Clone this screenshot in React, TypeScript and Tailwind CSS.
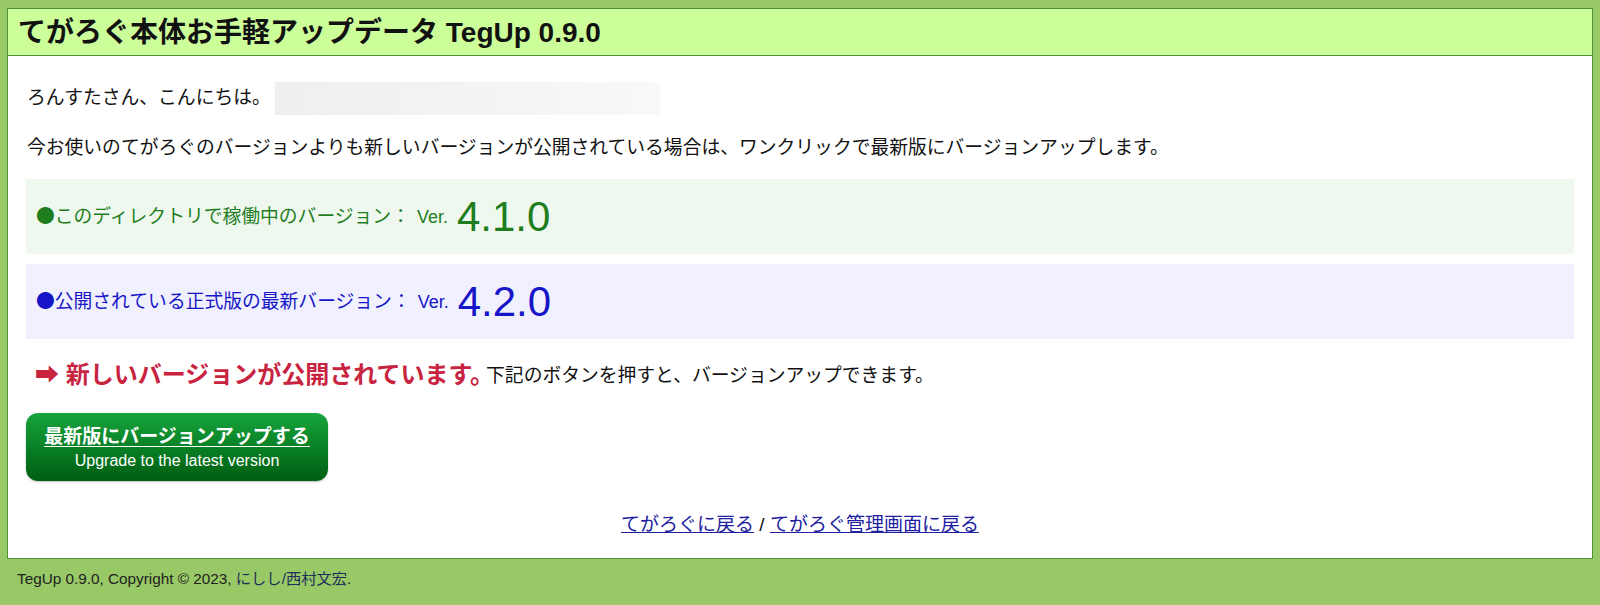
import React from 'react';

const jp = { fontFamily: '"Liberation Sans", "Noto Sans CJK JP", sans-serif' };
const cjk = { fontFamily: '"Noto Sans CJK JP", sans-serif' };

const VersionRow = ({ tone, label, version }: { tone: 'green' | 'blue'; label: string; version: string }) => {
  const box = tone === 'green' ? 'bg-[#eff8ef] text-[#1e7e1e]' : 'bg-[#f0f0fe] text-[#1616c8]';
  return (
    <div className={`flex items-center h-[75px] pl-[10px] ${box}`}>
      <span className="text-[18.8px]"><span style={cjk}>●</span>{label}：</span>
      <span className="ml-[7px] text-[18px] self-end mb-[23px]">Ver.</span>
      <span className="ml-[9px] text-[42px] leading-none">{version}</span>
    </div>
  );
};

export default function App() {
  return (
    <div className="w-[1600px] h-[605px] bg-[#99c866] pt-[8px] px-[7px] text-[#111]" style={jp}>
      <div className="border border-[#4f8f35] bg-white">
        <div className="h-[47px] bg-[#ccff99] border-b border-[#4f8f35] flex items-center pl-[10px] pt-[2px]">
          <h1 className="text-[28px] font-bold leading-none">てがろぐ本体お手軽アップデータ TegUp 0.9.0</h1>
        </div>

        <div className="px-[18px] pt-[26px] pb-[19px]">
          <div className="flex items-center h-[33px]">
            <span className="text-[18.8px] pl-[1px]">ろんすたさん、こんにちは。</span>
            <span className="ml-[4px] w-[385px] h-[33px] bg-gradient-to-r from-[#efefef] via-[#f3f3f3] to-[#f9f9f9]" />
          </div>

          <p className="mt-[19px] text-[18.8px] leading-[27px] pl-[1px]">
            今お使いのてがろぐのバージョンよりも新しいバージョンが公開されている場合は、ワンクリックで最新版にバージョンアップします。
          </p>

          <div className="mt-[18px] flex flex-col gap-[10px]">
            <VersionRow tone="green" label="このディレクトリで稼働中のバージョン" version="4.1.0" />
            <VersionRow tone="blue" label="公開されている正式版の最新バージョン" version="4.2.0" />
          </div>

          <div className="mt-[18px] h-[36px] flex items-center pl-[9px]">
            <span className="text-[24px] font-bold text-[#c8233f]">➡ 新しいバージョンが公開されています。</span>
            <span className="text-[18.8px] -ml-[8px] mt-[3px]">下記のボタンを押すと、バージョンアップできます。</span>
          </div>

          <button className="mt-[20px] w-[302px] h-[68px] rounded-[12px] bg-gradient-to-b from-[#17a53c] to-[#005e10] text-white flex flex-col items-center justify-center shadow-[0_1px_2px_rgba(0,0,0,0.25)]">
            <span className="text-[19px] font-bold underline underline-offset-[3px] leading-[26px]">最新版にバージョンアップする</span>
            <span className="text-[16px] leading-[21px]">Upgrade to the latest version</span>
          </button>

          <div className="mt-[30px] text-center text-[19px] leading-[28px]">
            <a href="#" className="text-[#2020a0] underline">てがろぐに戻る</a>
            <span> / </span>
            <a href="#" className="text-[#2020a0] underline">てがろぐ管理画面に戻る</a>
          </div>
        </div>
      </div>

      <div className="pl-[10px] pt-[9px] text-[15.3px] text-[#222]">
        TegUp 0.9.0, Copyright © 2023, <a href="#" className="text-[#1e2f5a]">にしし/西村文宏</a>.
      </div>
    </div>
  );
}
